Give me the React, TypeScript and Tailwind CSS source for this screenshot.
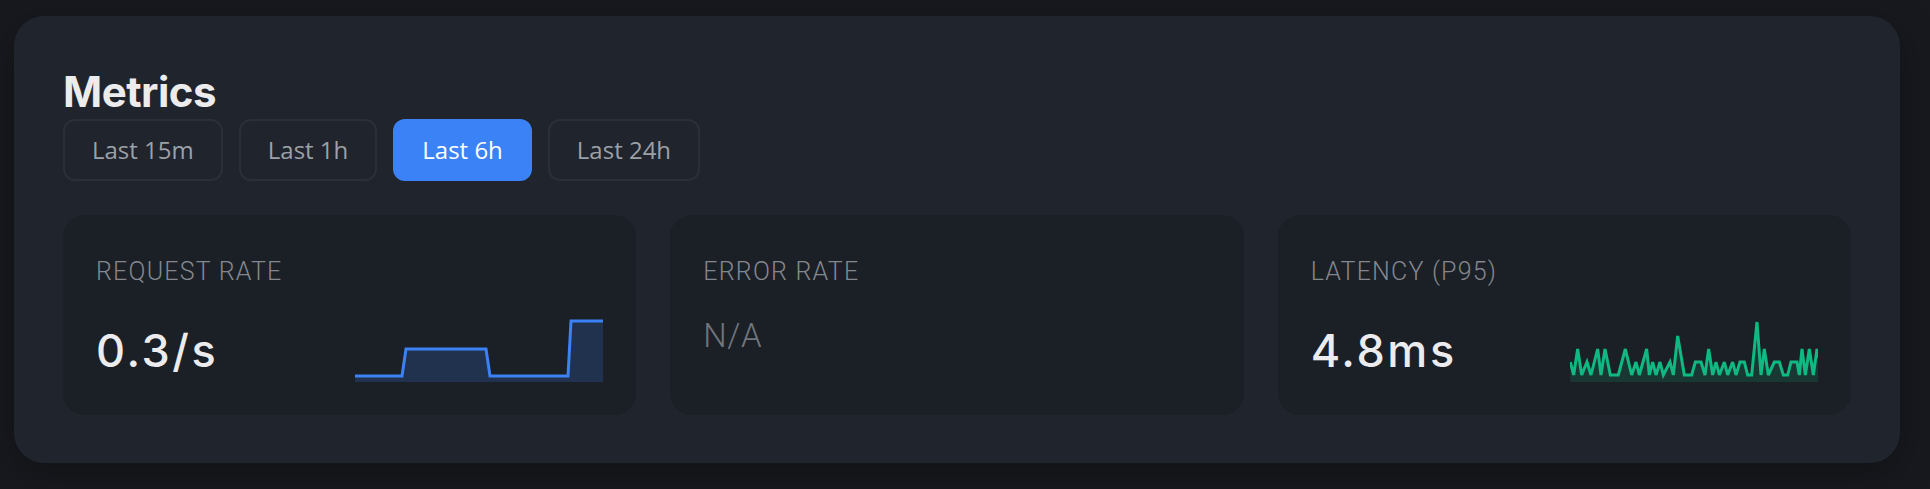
import React from "react";

const L = [57, 44, 31, 18, 4];

const greenPts: [number, number][] = [
  [0.33, 1], [3.67, 0], [7.67, 2], [11.67, 0], [17, 1], [21, 0], [27.67, 2], [31, 0], [35, 2], [40.33, 0],
  [48.33, 0], [55.33, 2], [61.67, 0], [66, 1], [69.33, 0], [76.67, 2], [79.33, 0], [82.67, 1], [86, 0], [90, 1],
  [93.33, 0], [100, 1], [103.33, 0], [107.67, 3], [114.33, 0], [121.67, 0], [125.33, 1], [131, 1], [135, 0], [138.67, 2],
  [142.67, 0], [146, 1], [149.33, 0], [154.33, 1], [157.67, 0], [162.67, 1], [166, 0], [170, 1], [174.33, 1], [177.67, 0],
  [181.67, 0], [187, 4], [191, 0], [194.33, 2], [198.33, 0], [204.33, 1], [209.33, 1], [213.33, 0], [217.67, 0], [221, 1],
  [227, 1], [229.33, 0], [232, 2], [235.33, 0], [239.33, 2], [243.33, 0], [247, 2],
];

const greenLine = greenPts.map(([x, l]) => `${x},${L[l]}`).join(" ") + " 248,40";
const blueLine = "0,58 47,58 51,31 131,31 135,58 213,58 216,3 248,3";

function Spark({ line, color, fill }: { line: string; color: string; fill: string }) {
  const first = line.split(" ")[0].split(",")[0];
  const area = `${first},64 ${line} 248,64`;
  return (
    <svg width="248" height="64" viewBox="0 0 248 64" className="block shrink-0">
      <polygon points={area} fill={fill} />
      <polyline points={line} fill="none" stroke={color} strokeWidth="3" strokeLinejoin="miter" strokeMiterlimit={3} />
    </svg>
  );
}

function Card({
  label,
  value,
  muted,
  spark,
}: {
  label: string;
  value: string;
  muted?: boolean;
  spark?: React.ReactNode;
}) {
  return (
    <div className="h-[200px] rounded-[22px] bg-[#1b1f26] px-[33px] pt-[42px]">
      <div className="font-['Roboto'] text-[25px] font-light leading-[30px] tracking-[1.2px] text-[#84878e]">{label}</div>
      {muted ? (
        <div className="mt-[31px] font-['Roboto'] text-[33px] font-light leading-[36px] tracking-[0.5px] text-[#70747c]">{value}</div>
      ) : (
        <div className="mt-[31px] flex items-center justify-between">
          <div className="font-['Inter'] text-[45px] font-medium leading-[45px] tracking-[2.6px] text-[#ececef]">
            {value}
          </div>
          {spark}
        </div>
      )}
    </div>
  );
}

export default function App() {
  const ranges = ["Last 15m", "Last 1h", "Last 6h", "Last 24h"];
  return (
    <div className="min-h-screen w-full bg-[#17191e] pl-[14px] pt-[16px]">
      <div className="h-[447px] w-[1886px] rounded-[30px] bg-[#1f242d] px-[49px] pt-[49px] shadow-[0_10px_40px_rgba(0,0,0,0.28)]">
        <h2 className="font-['Inter'] text-[42px] font-bold leading-[54px] tracking-[-0.5px] text-[#ececec]">Metrics</h2>
        <div className="flex gap-4">
          {ranges.map((r) => {
            const active = r === "Last 6h";
            return (
              <button
                key={r}
                className={
                  active
                    ? "h-[62px] rounded-[12px] border-2 border-[#3b82f6] bg-[#3b82f6] px-[27px] font-['Open_Sans'] text-[24px] text-white"
                    : "h-[62px] rounded-[12px] border-2 border-[#2a303a] bg-transparent px-[27px] font-['Open_Sans'] text-[24px] text-[#9ca0a7]"
                }
              >
                {r}
              </button>
            );
          })}
        </div>
        <div className="mt-[34px] grid grid-cols-3 gap-[34px]">
          <Card
            label="REQUEST RATE"
            value="0.3/s"
            spark={<Spark line={blueLine} color="#3b82f6" fill="rgba(59,130,246,0.2)" />}
          />
          <Card label="ERROR RATE" value="N/A" muted />
          <Card
            label="LATENCY (P95)"
            value="4.8ms"
            spark={<Spark line={greenLine} color="#10b981" fill="rgba(16,185,129,0.16)" />}
          />
        </div>
      </div>
    </div>
  );
}
